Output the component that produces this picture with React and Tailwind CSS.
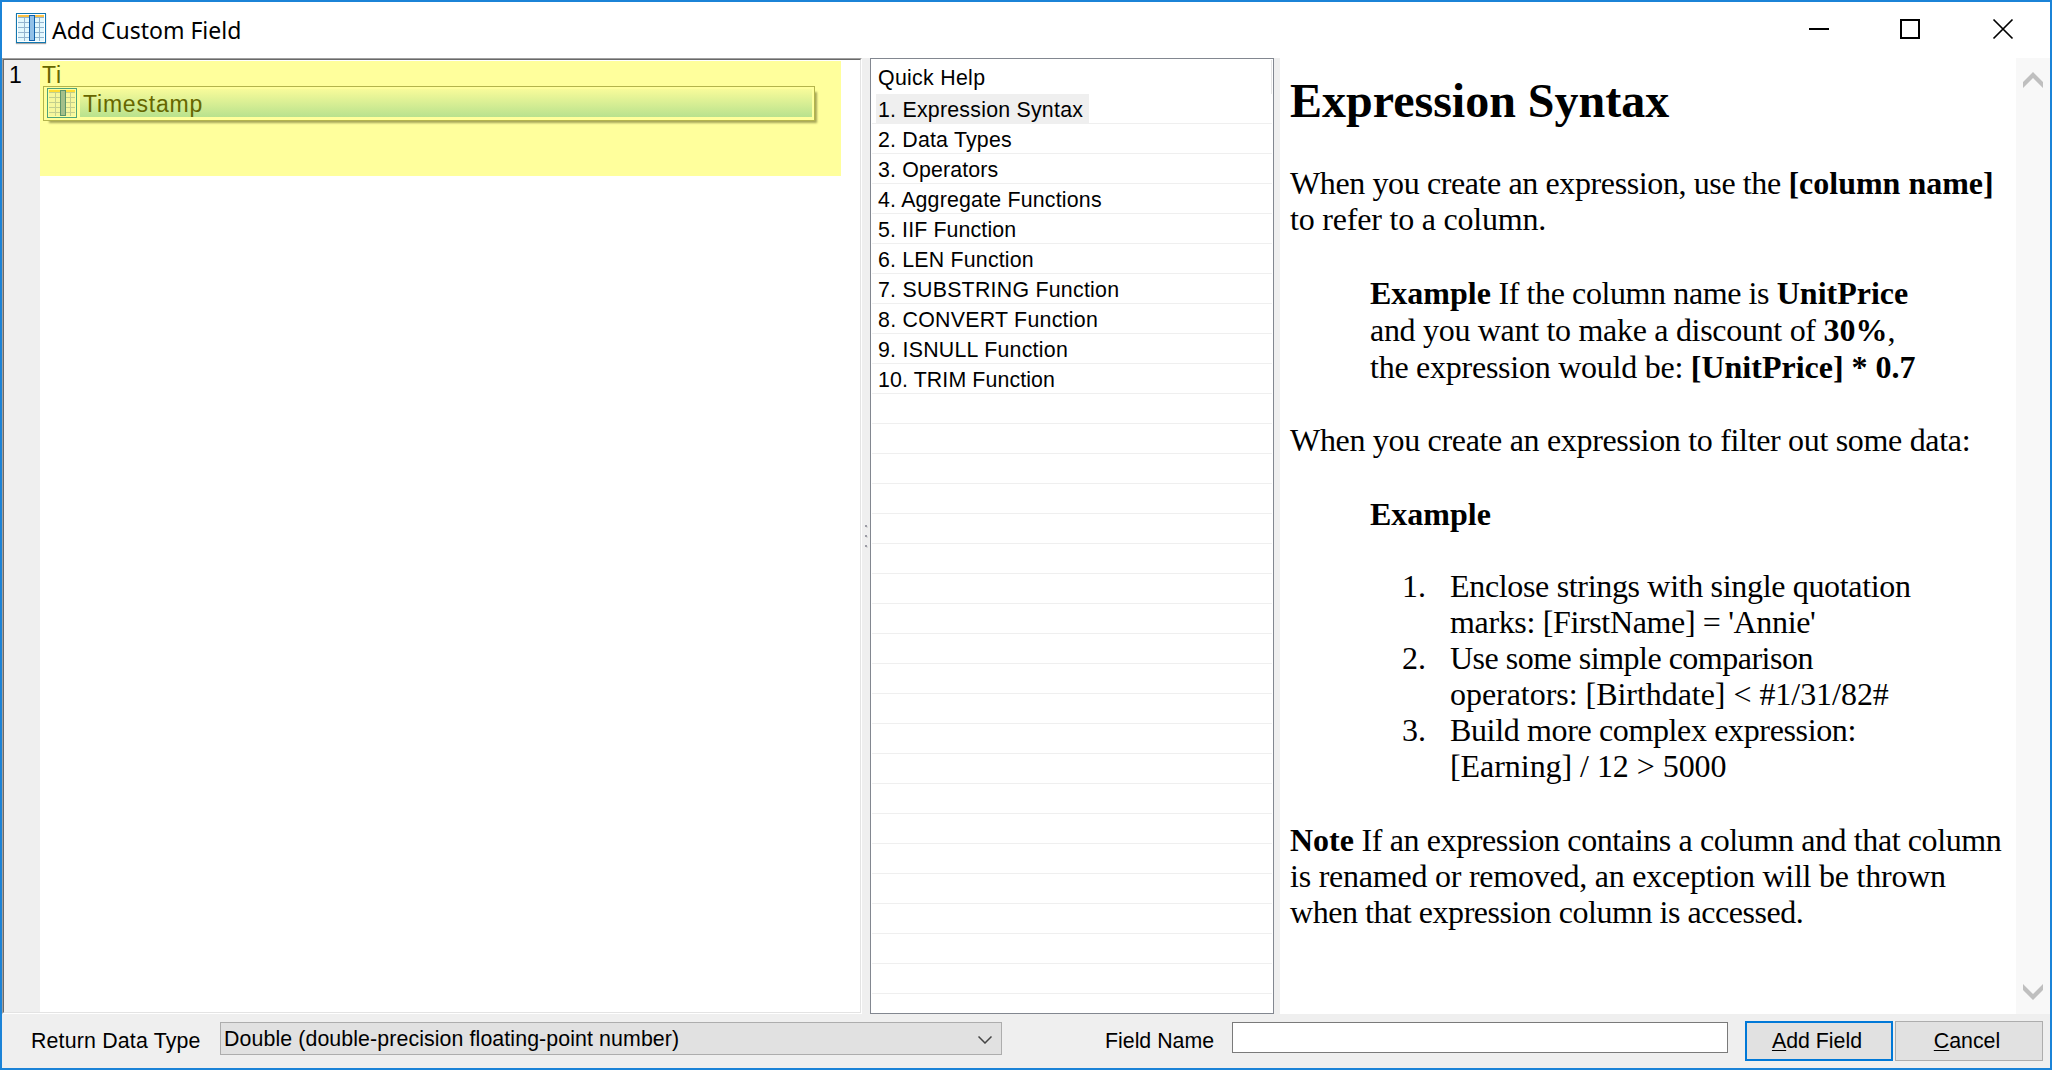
const TOPICS = [
  ["1. Expression Syntax", "tracking-[0.240px]"],
  ["2. Data Types", "tracking-[0.200px]"],
  ["3. Operators", "tracking-[0.150px]"],
  ["4. Aggregate Functions", "tracking-[0.200px]"],
  ["5. IIF Function", "tracking-[0.130px]"],
  ["6. LEN Function", "tracking-[0.200px]"],
  ["7. SUBSTRING Function", "tracking-[0.260px]"],
  ["8. CONVERT Function", "tracking-[0.270px]"],
  ["9. ISNULL Function", "tracking-[0.260px]"],
  ["10. TRIM Function", "tracking-[0.120px]"],
];
const ROWS = Array.from({ length: 30 }, (_, i) => TOPICS[i] || ["", ""]);

function ColumnIcon({ className, tinted }) {
  const c = tinted
    ? { edge: "#4fa37a", bg: "#f6f79d", head: "#ffdd33", grid: "#c3cf8e", bar: "#a3bf8a", barEdge: "#5c946a" }
    : { edge: "#1177b0", bg: "#e2f7fd", head: "#fcc143", grid: "#93b4cf", bar: "#92c0e8", barEdge: "#1060ac" };
  return (
    <svg viewBox="0 0 30 30" className={className} shapeRendering="crispEdges">
      <rect x="0.5" y="0.5" width="29" height="29" fill={tinted ? "#ffff9e" : "#fff"} stroke={c.edge} />
      <rect x="2" y="2" width="26" height="26" fill={c.bg} />
      <path d="M8.5 2v26M23.5 2v26M2 4.5h26M2 9.5h26M2 14.5h26M2 19.5h26M2 24.5h26" stroke={c.grid} fill="none" />
      <rect x="2" y="2" width="26" height="2" fill={c.head} />
      <rect x="13.5" y="2.5" width="5" height="25" fill={c.bar} stroke={c.barEdge} />
    </svg>
  );
}

function TitleBar() {
  return (
    <header className="flex h-14 shrink-0 bg-white">
      <ColumnIcon className="mt-[11px] ml-[14px] h-[30px] w-[30px] shadow-[0_1px_1px_#aaa]" />
      <h1 className="mt-[12px] ml-[6px] font-['Noto_Sans',sans-serif] text-[23px] leading-[32px]">Add Custom Field</h1>
      <svg className="ml-auto h-14 w-[250px]" viewBox="0 0 250 56" fill="none" stroke="#000" strokeWidth="2">
        <path d="M9 27h20" shapeRendering="crispEdges" />
        <rect x="101" y="18" width="18" height="18" shapeRendering="crispEdges" />
        <path d="M193.500 17.500l19 19M212.500 17.500l-19 19" strokeWidth="1.700" />
      </svg>
    </header>
  );
}

function Editor() {
  return (
    <section className="flex w-[860px] shrink-0 border border-t-[#a0a0a0] border-r-white border-b-white border-l-[#a0a0a0]">
      <div className="flex flex-1 border border-t-[#696969] border-r-[#e3e3e3] border-b-[#e3e3e3] border-l-[#696969] bg-white">
        <div className="w-9 bg-[#efefef] pt-[1px] pl-[5px] text-[23px] leading-[28px]">1</div>
        <div className="mt-[1px] h-[115px] w-[801px] bg-[#ffff9c] text-[#666600]">
          <div className="h-[25px] pl-[2px] text-[23px] leading-[28px] tracking-[0.900px]">Ti</div>
          <div className="ml-[3px] flex h-[35px] w-[772px] border border-[#b4b44c] p-[1px] pr-[2px] shadow-[4px_4px_2px_-2px_#a8a858]">
            <ColumnIcon tinted className="ml-[2px] h-[30px] w-[30px]" />
            <div className="mt-[1px] mb-[2px] ml-[3px] flex-1 bg-linear-to-b from-[#f8fb9a] to-[#b8e28e] pl-[3px] text-[23px] leading-[30px] tracking-[0.800px]">Timestamp</div>
          </div>
        </div>
      </div>
    </section>
  );
}

function Grip() {
  return <i className="h-[2px] w-[2px] bg-[#9c9ca6] shadow-[1px_1px_0_#dcdcdc]" />;
}

function Splitter() {
  return (
    <div className="flex w-[8px] shrink-0 flex-col items-center justify-center gap-[8px] bg-[#efefef]">
      <Grip />
      <Grip />
      <Grip />
    </div>
  );
}

function QuickHelp() {
  return (
    <nav className="w-[404px] shrink-0 overflow-hidden border border-[#828790] bg-white px-[1px] text-[21.33px] leading-[29px]">
      <div className="mt-[1px] h-[34px] border-r border-[#e5e5e5] pl-[6px] leading-[36px] tracking-[0.300px]">Quick Help</div>
      {ROWS.map(([topic, tracking], i) => (
        <div key={i} className="h-[30px] border-b border-[#efefef] pl-[4px]">
          <div className={`h-[29px] w-[213px] pl-[2px] leading-[32px] whitespace-nowrap ${tracking} ${i === 0 ? "bg-[#efefef]" : ""}`}>
            {topic}
          </div>
        </div>
      ))}
    </nav>
  );
}

function Step({ number, children }) {
  return (
    <li className="flex">
      <span className="w-12 shrink-0">{number}.</span>
      <div>{children}</div>
    </li>
  );
}

function Article() {
  return (
    <article className="min-w-0 flex-1 bg-white pl-[10px] font-['Liberation_Serif',serif] text-[32px] leading-[36px] whitespace-nowrap">
      <h2 className="mt-[12px] text-[48px] leading-[61px] font-bold">Expression Syntax</h2>
      <p className="mt-[34px]">
        <span className="tracking-[-0.390px]">When you create an expression, use the </span><b>[column name]</b><br />
        <span className="tracking-[-0.200px]">to refer to a column.</span>
      </p>
      <p className="mt-[38px] ml-20 leading-[37px]">
        <b>Example</b><span className="tracking-[-0.400px]"> If the column name is </span><b>UnitPrice</b><br />
        <span className="tracking-[-0.300px]">and you want to make a discount of </span><b>30%</b>,<br />
        <span className="tracking-[-0.250px]">the expression would be: </span><b>[UnitPrice] * 0.7</b>
      </p>
      <p className="mt-[36px] tracking-[-0.320px]">When you create an expression to filter out some data:</p>
      <p className="mt-[38px] ml-20 font-bold">Example</p>
      <ol className="mt-[36px] ml-28">
        <Step number={1}>
          <span className="tracking-[-0.330px]">Enclose strings with single quotation</span><br />
          <span className="tracking-[-0.350px]">marks: [FirstName] = 'Annie'</span>
        </Step>
        <Step number={2}>
          <span className="tracking-[-0.500px]">Use some simple comparison</span><br />
          <span className="tracking-[-0.040px]">operators: [Birthdate] &lt; #1/31/82#</span>
        </Step>
        <Step number={3}>
          <span className="tracking-[-0.360px]">Build more complex expression:</span><br />
          <span className="tracking-[-0.050px]">[Earning] / 12 &gt; 5000</span>
        </Step>
      </ol>
      <p className="mt-[38px]">
        <b>Note</b><span className="tracking-[-0.390px]"> If an expression contains a column and that column</span><br />
        <span className="tracking-[-0.230px]">is renamed or removed, an exception will be thrown</span><br />
        <span className="tracking-[-0.450px]">when that expression column is accessed.</span>
      </p>
    </article>
  );
}

function ScrollBar() {
  return (
    <div className="flex w-[34px] shrink-0 flex-col items-center justify-between bg-[#f8f8f8] py-[14px]">
      <svg className="h-4 w-5" viewBox="0 0 20 16"><path d="M0 10L10 0l10 10v6L10 6 0 16z" fill="#bfbfbf" /></svg>
      <svg className="h-4 w-5" viewBox="0 0 20 16"><path d="M0 0l10 10L20 0v6L10 16 0 6z" fill="#bfbfbf" /></svg>
    </div>
  );
}

function Footer() {
  return (
    <footer className="flex h-[54px] shrink-0 bg-[#efefef] text-[21.33px]">
      <label className="mt-[14px] ml-[29px] w-[189px] leading-[26px] tracking-[0.180px]">Return Data Type</label>
      <div className="mt-[8px] flex h-[33px] w-[782px] justify-between border border-[#adadad] bg-[#e1e1e1] pr-[9px] pl-[3px] leading-[33px] tracking-[0.100px]">
        Double (double-precision floating-point number)
        <svg className="mt-[13px] h-2 w-[14px]" viewBox="0 0 14 8" fill="none" stroke="#444" strokeWidth="1.500"><path d="M0.500 0.500L7 7l6.500-6.500" /></svg>
      </div>
      <label className="mt-[14px] ml-[103px] w-[127px] leading-[26px]">Field Name</label>
      <div className="mt-[8px] h-[31px] w-[496px] border border-[#7a7a7a] bg-white" />
      <button className="mt-[7px] ml-[17px] h-[40px] w-[148px] border-2 border-[#0078d7] bg-[#e1e1e1] pt-[2px] pr-1"><span className="underline decoration-1 underline-offset-2">A</span>dd Field</button>
      <button className="mt-[7px] ml-[2px] h-[40px] w-[148px] border border-[#adadad] bg-[#e1e1e1] pt-[2px] pr-1"><span className="underline decoration-1 underline-offset-2">C</span>ancel</button>
    </footer>
  );
}

export default function App() {
  return (
    <div className="flex h-[1070px] w-[2052px] flex-col overflow-hidden border-2 border-[#1b83d7] bg-white font-['Liberation_Sans',sans-serif] text-black">
      <TitleBar />
      <main className="flex h-[956px] shrink-0">
        <Editor />
        <Splitter />
        <QuickHelp />
        <div className="w-[6px] shrink-0 bg-[#efefef]" />
        <Article />
        <ScrollBar />
      </main>
      <Footer />
    </div>
  );
}
